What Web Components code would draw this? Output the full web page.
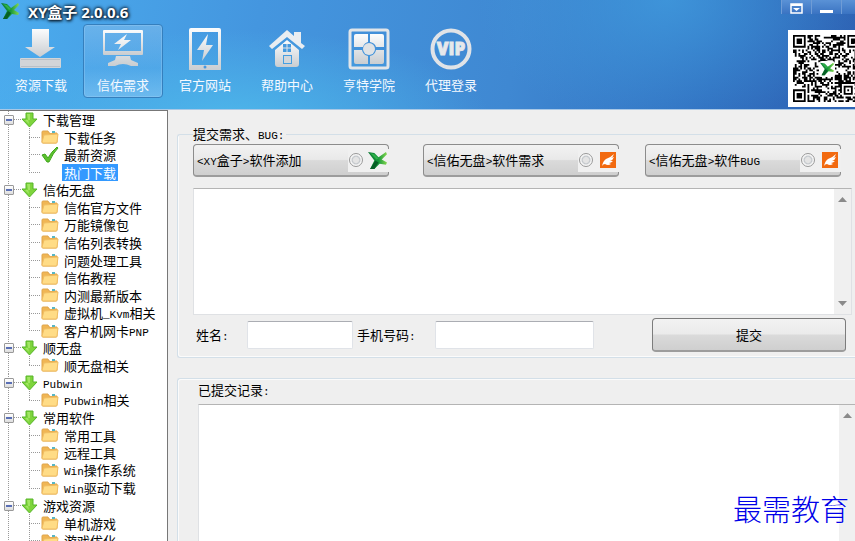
<!DOCTYPE html>
<html lang="zh-CN">
<head>
<meta charset="utf-8">
<title>XY盒子 2.0.0.6</title>
<style>
  html, body { height: 100%; margin: 0; }
  body {
    font: 13px/17px "Noto Sans CJK SC", sans-serif;
    color: #000;
    background: #efefef;
    overflow: hidden;
  }
</style>
</head>
<body>
<xy-app></xy-app>

<script>
const ICONS = {
  logo: `<svg viewBox="0 0 18 18"><defs><linearGradient id="g" x2="1"><stop offset="0" stop-color="#0b7a33"/><stop offset=".55" stop-color="#17983b"/><stop offset="1" stop-color="#86d850"/></linearGradient></defs>
    <path fill="url(#g)" d="M0 1l6 1 4 4 7-5 1 2-5 5 5 3-1 2-6-1-5 5H2l4-8z"/><path fill="#075f26" d="M2 17l5-8 3 2-4 6z"/><path fill="#2fb04a" d="M2 2l4 1 4 4-2 1z"/></svg>`,
  download: `<svg viewBox="0 0 42 42"><path fill="url(#m)" d="M12 1h17v18h6L20 29 5 19h7z"/><rect x="0" y="30" width="41" height="10" rx="1" fill="#d2d5d8"/><path d="M1 31.500h39M1 38.500h39" stroke="#b9c0c7"/></svg>`,
  monitor: `<svg viewBox="0 0 42 42"><path fill="url(#m)" fill-rule="evenodd" d="M2 2h38q1 0 1 1v23q0 1-1 1H2q-1 0-1-1V3q0-1 1-1zm1 3v18h36V5z"/><path fill="url(#m)" d="M25 6L12 16h7l-3 6 13-10h-7zM14 28h14l1 4 7 3v3H29q-8-4-16 0H6v-3l7-3z"/></svg>`,
  tablet: `<svg viewBox="0 0 42 42"><path fill="url(#m)" fill-rule="evenodd" d="M7 0h28q2 0 2 2v39q0 2-2 2H7q-2 0-2-2V2q0-2 2-2zm1 4v33h26V4z"/><path fill="url(#m)" d="M24 6L13 22h7l-2 11 11-16h-7z"/><circle cx="21" cy="39" r="1.500" fill="#4798df"/></svg>`,
  house: `<svg viewBox="0 0 42 42"><path fill="#e9edf1" d="M21 2l7 6V4h7v11l4 3-3 3L21 9 6 21l-3-3z"/><path fill="url(#m)" fill-rule="evenodd" d="M21 12l12 10v14q0 3-3 3H12q-3 0-3-3V22zM17 16v8h8v-8zM17 27v9h9v-9z"/><path d="M21 16v8M17 20h8" stroke="#dfe3e8"/><path fill="#d3d7db" d="M18 28h7v7h-7z"/></svg>`,
  academy: `<svg viewBox="0 0 42 42"><rect x="2" y="2" width="38" height="38" rx="2" fill="none" stroke="#e1e5e9" stroke-width="3"/><path fill="url(#m)" d="M8 6h12v8q-4 1-5 5H6V8q0-2 2-2zM22 6h12q2 0 2 2v11h-8q-1-4-6-5zM6 22h8q1 5 6 6v8H8q-2 0-2-2zM28 22h8v12q0 2-2 2H22v-8q5-1 6-6z"/><circle cx="21" cy="21" r="6" fill="#dfe2e5"/></svg>`,
  vip: `<svg viewBox="0 0 42 42"><circle cx="21" cy="21" r="18.500" fill="none" stroke="#e0e3e7" stroke-width="4"/><text x="21" y="27" text-anchor="middle" font-family="Open Sans, sans-serif" font-size="17" font-weight="800" fill="#e6e8eb" stroke="#e6e8eb" stroke-width=".8">VIP</text></svg>`,
  arrow: `<svg viewBox="0 0 17 16"><path d="M5 1h7v6h4l-7.500 8L1 7h4z" fill="#7ed43c" stroke="#57b528"/><path d="M6 2h3v6H4l4 4" fill="#b0ee74" opacity=".7"/></svg>`,
  folder: `<svg viewBox="0 0 18 16"><path d="M1 3q0-1 1-1h5l1 2h8v9q0 1-1 1H2q-1 0-1-1z" fill="#f0b655" stroke="#dfa54c"/><path d="M9 2l5-1v3H9z" fill="#fff"/><path d="M11 2h3v2h-3z" fill="#58b6c4"/><path d="M3 6l14-1-1 8q0 1-1 1H2q-1 0-1-1z" fill="#ffdc86" stroke="#f0bd62"/></svg>`,
  check: `<svg viewBox="0 0 18 16"><path d="M1 8l3-1 3 4q3-6 9-11l1 1q-5 5-9 14H6z" fill="#5cc32e" stroke="#41a51d"/></svg>`,
  wing: `<svg viewBox="0 0 16 16"><path fill="#f26a10" d="M0 0h16v16H0z"/><path fill="#fff" d="M2 14q1-5 4-7 4-1 8-5-1 3-3 4l3-1q-1 3-4 4h3q-2 2-4 2l2 1q-3 2-6 0-2 0-3 2z"/></svg>`,
  up: `<svg viewBox="0 0 9 5"><path d="M0 5l4.500-5L9 5z" fill="#8a8a8a"/></svg>`,
  down: `<svg viewBox="0 0 9 5"><path d="M0 0h9L4.500 5z" fill="#8a8a8a"/></svg>`
};

// metal gradient shared by the toolbar icons
const METAL = '<defs><linearGradient id="m" x2="0" y2="1"><stop offset="0" stop-color="#fbfcfd"/><stop offset="1" stop-color="#c9cdd1"/></linearGradient></defs>';

const metalIcon = name => ICONS[name].replace('>', `>${METAL}`);

class BaseElement extends HTMLElement {
  constructor() {
    super();
    this.attachShadow({ mode: 'open' });
  }

  connectedCallback() {
    this.shadowRoot.innerHTML = `
    <style>
      * { box-sizing: border-box; }
      svg { display: block; }
      small, ::slotted(small) { font: 11px/13px "Liberation Mono", monospace; }
      ${this.constructor.styles}
    </style>
    ${this.render()}`;
  }
}

/*************************** HEADER ***************************/

class ToolButton extends BaseElement {
  static get styles() {
    return /* css */ `
      :host { display: block; width: 80px; }
      button {
        display: flex;
        flex-direction: column;
        align-items: center;
        gap: 6px;
        width: 100%;
        height: 74px;
        padding: 3px 0 0;
        border: 1px solid transparent;
        border-radius: 4px;
        background: none;
        color: #f4f9ff;
        font: inherit;
      }
      svg { width: 42px; height: 42px; }
      :host([active]) button {
        border-color: #357fbd;
        background: linear-gradient(#7fbcec99, #5aa9ea66 60%, #83c3f399);
        box-shadow: inset 0 0 0 1px #a6d3f655;
      }
    `;
  }

  render() {
    return /* html */ `<button type="button">${metalIcon(this.getAttribute('icon'))}<span><slot></slot></span></button>`;
  }
}

class QrCode extends BaseElement {
  static get styles() {
    return /* css */ `
      :host {
        display: grid;
        place-items: center;
        width: 77px;
        height: 77px;
        background: #fff;
      }
      .code, .mark { grid-area: 1 / 1; }
      .code { width: 67px; height: 67px; }
      .mark { padding: 1px; background: #fff; border-radius: 3px; }
      .mark svg { width: 14px; height: 14px; }
    `;
  }

  modules() {
    const size = 37;
    const corners = [[0, 0], [size - 7, 0], [0, size - 7], [size - 9, size - 9]];
    let seed = 77;
    let path = '';

    for (let y = 0; y < size; y++) {
      for (let x = 0; x < size; x++) {
        seed = (seed * 1103515245 + 12345) % 2147483648;
        let dark = seed / 2147483648 > 0.48;

        corners.forEach(([cx, cy], i) => {
          const half = i === 3 ? 2 : 3;
          const ring = Math.max(Math.abs(x - cx - half), Math.abs(y - cy - half));
          if (ring <= half + 1) {
            dark = i === 3 ? ring === 2 || ring === 0 : ring === 3 || ring < 2;
          }
        });
        if (dark) path += `M${x} ${y}h1v1h-1z`;
      }
    }
    return path;
  }

  render() {
    return /* html */ `
      <svg class="code" viewBox="0 0 37 37"><path d="${this.modules()}" fill="#000"/></svg>
      <div class="mark">${ICONS.logo}</div>`;
  }
}

class AppHeader extends BaseElement {
  static get styles() {
    return /* css */ `
      :host {
        display: block;
        height: 110px;
        overflow: hidden;
        border-bottom: 1px solid #a9c8e6;
        background:
          radial-gradient(ellipse 260px 90px at 27% 110%, #4db6ea, #4db6ea00),
          radial-gradient(ellipse 190px 130px at 78% 0, #409bdecc, #409bde00),
          linear-gradient(100deg, #4bacee, #4496df 30%, #3f88d2 60%, #3170c0 83%, #2e63b4);
      }
      .title-bar { display: flex; height: 24px; padding-left: 1px; }
      .title-bar > svg { width: 18px; height: 18px; margin-top: 2px; }
      h1 {
        flex: 1;
        margin: 0 0 0 9px;
        font: 700 15px/25px "Open Sans", "Noto Sans CJK SC", sans-serif;
        color: #fff;
        text-shadow: 0 0 3px #012, 0 0 4px #123, 1px 1px 3px #123;
      }
      .controls { display: flex; height: 13px; margin-right: -16px; }
      .controls button {
        width: 30px;
        height: 14px;
        padding: 2px 0 0 8px;
        border: 0;
        border-left: 1px solid #6f9cd6;
        background: linear-gradient(#5a92d6, #3a73c2);
      }
      .controls svg { width: 13px; height: 11px; }
      .bar { display: flex; justify-content: space-between; }
      nav { display: flex; gap: 2px; padding-left: 1px; }
      qr-code { margin: 6px -10px 0 0; }
    `;
  }

  render() {
    return /* html */ `
      <div class="title-bar">
        ${ICONS.logo}
        <h1>XY盒子 2.0.0.6</h1>
        <div class="controls">
          <button type="button" aria-label="菜单"><svg viewBox="0 0 13 11"><path d="M1 1h11v9H1z" fill="none" stroke="#fff" stroke-width="1.500"/><path d="M1 2h11" stroke="#fff" stroke-width="2"/><path d="M3 5h7L6.500 8z" fill="#fff"/></svg></button>
          <button type="button" aria-label="最小化"><svg viewBox="0 0 13 11"><path d="M0 7h13v3H0z" fill="#fff"/></svg></button>
          <button type="button" aria-label="关闭"></button>
        </div>
      </div>
      <div class="bar">
        <nav>
          <tool-button icon="download">资源下载</tool-button>
          <tool-button icon="monitor" active>信佑需求</tool-button>
          <tool-button icon="tablet">官方网站</tool-button>
          <tool-button icon="house">帮助中心</tool-button>
          <tool-button icon="academy">亨特学院</tool-button>
          <tool-button icon="vip">代理登录</tool-button>
        </nav>
        <qr-code></qr-code>
      </div>`;
  }
}

/**************************** TREE ****************************/

class TreeItem extends BaseElement {
  static get styles() {
    return /* css */ `
      :host { display: flex; align-items: center; height: 18px; white-space: nowrap; }
      :host(:nth-child(3n)) { height: 17px; }
      .line {
        width: 12px;
        height: 1px;
        background: repeating-linear-gradient(90deg, #999 0 1px, #fff 1px 2px);
      }
      .icon { width: 18px; height: 16px; margin-right: 3px; }
      .text { padding: 0 2px; }
      :host([selected]) .text { background: #3399ff; color: #fff; }
    `;
  }

  render() {
    return /* html */ `
      <span class="line"></span>
      <span class="icon">${ICONS[this.getAttribute('icon') || 'folder'] || ''}</span>
      <span class="text"><slot></slot></span>`;
  }
}

class TreeGroup extends BaseElement {
  static get styles() {
    return /* css */ `
      :host {
        --dots: repeating-linear-gradient(#999 0 1px, #fff 1px 2px);
        display: block;
        background: var(--dots) 8px 0 / 1px 100% no-repeat;
      }
      .head { display: flex; align-items: center; height: 17px; padding-left: 4px; }
      button {
        width: 10px;
        height: 10px;
        padding: 3px 1px;
        border: 1px solid #999;
        border-radius: 1px;
        background: linear-gradient(#fff, #ddd);
      }
      button::before { content: ""; display: block; height: 2px; background: #5a6fb5; }
      .line {
        width: 7px;
        height: 1px;
        background: repeating-linear-gradient(90deg, #999 0 1px, #fff 1px 2px);
      }
      svg { width: 17px; height: 16px; margin-right: 5px; }
      .items {
        padding-left: 29px;
        background: var(--dots) 29px 0 / 1px calc(100% - 9px) no-repeat;
      }
    `;
  }

  render() {
    return /* html */ `
      <div class="head">
        <button type="button" aria-label="折叠"></button>
        <span class="line"></span>
        ${ICONS.arrow}
        <div><slot name="label"></slot></div>
      </div>
      <div class="items"><slot></slot></div>`;
  }
}

class SideTree extends BaseElement {
  static get styles() {
    return /* css */ `
      :host {
        display: block;
        width: 168px;
        flex: none;
        overflow: hidden;
        border: solid #777;
        border-width: 1px 1px 0 0;
        background: #fff;
      }
    `;
  }

  render() {
    return /* html */ `
      <tree-group><span slot="label">下载管理</span>
        <tree-item>下载任务</tree-item>
        <tree-item icon="check">最新资源</tree-item>
        <tree-item icon="none" selected>热门下载</tree-item>
      </tree-group>
      <tree-group><span slot="label">信佑无盘</span>
        <tree-item>信佑官方文件</tree-item>
        <tree-item>万能镜像包</tree-item>
        <tree-item>信佑列表转换</tree-item>
        <tree-item>问题处理工具</tree-item>
        <tree-item>信佑教程</tree-item>
        <tree-item>内测最新版本</tree-item>
        <tree-item>虚拟机<small>_Kvm</small>相关</tree-item>
        <tree-item>客户机网卡<small>PNP</small></tree-item>
      </tree-group>
      <tree-group><span slot="label">顺无盘</span>
        <tree-item>顺无盘相关</tree-item>
      </tree-group>
      <tree-group><span slot="label"><small>Pubwin</small></span>
        <tree-item><small>Pubwin</small>相关</tree-item>
      </tree-group>
      <tree-group><span slot="label">常用软件</span>
        <tree-item>常用工具</tree-item>
        <tree-item>远程工具</tree-item>
        <tree-item><small>Win</small>操作系统</tree-item>
        <tree-item><small>Win</small>驱动下载</tree-item>
      </tree-group>
      <tree-group><span slot="label">游戏资源</span>
        <tree-item>单机游戏</tree-item>
        <tree-item>游戏优化</tree-item>
      </tree-group>`;
  }
}

/**************************** FORM ****************************/

class ScrollBox extends BaseElement {
  static get styles() {
    return /* css */ `
      :host {
        display: flex;
        border: 1px solid #dfe1e4;
        border-top-color: #b4b4b4;
        background: #fff;
      }
      textarea {
        flex: 1;
        min-width: 0;
        padding: 2px;
        border: 0;
        outline: 0;
        resize: none;
        overflow: hidden;
        background: none;
        font: inherit;
      }
      .track {
        display: flex;
        flex-direction: column;
        justify-content: space-between;
        align-items: center;
        width: 17px;
        padding: 8px 0;
        background: #f0f0f0;
      }
      .track svg { width: 9px; height: 5px; }
    `;
  }

  render() {
    return /* html */ `
      <textarea aria-label="${this.getAttribute('label')}"></textarea>
      <div class="track">${ICONS.up}${ICONS.down}</div>`;
  }
}

class DemandForm extends BaseElement {
  static get styles() {
    return /* css */ `
      :host { display: block; }
      fieldset {
        min-width: 0;
        margin: 0;
        padding: 1px 3px 5px 15px;
        border: 1px solid #d3dfe8;
        border-right: 0;
        border-radius: 3px 0 0 3px;
        box-shadow: inset 1px -1px #fbfbfb;
      }
      legend { padding: 0 2px 0 0; }
      .choices {
        display: grid;
        grid-template-columns: 230fr 222fr 196fr;
        padding-right: 11px;
      }
      .choice {
        display: flex;
        align-items: center;
        justify-content: space-between;
        width: 196px;
        height: 33px;
        padding-left: 3px;
        border: 1px solid #8c8c8c;
        border-bottom: 2px solid #9c9c9c;
        border-radius: 4px;
        background: linear-gradient(#f2f2f2, #e9e9e9 48%, #dadada 52%, #cfcfcf);
      }
      .pick {
        display: flex;
        align-items: center;
        gap: 7px;
        height: 23px;
        margin-right: -1px;
        padding: 0 3px 0 1px;
        background: #f0f0f0;
      }
      .pick svg { width: 16px; height: 16px; }
      .pick .big { width: 19px; height: 19px; margin: 0 -1px 0 -2px; }
      input[type=radio] {
        appearance: none;
        width: 14px;
        height: 14px;
        margin: 0;
        border: 1px solid #999;
        border-radius: 50%;
        background: radial-gradient(#e4e4e4 30%, #c4c8cc 45%, #f6f6f6 60%);
      }
      scroll-box { height: 127px; margin-top: 11px; }
      .contact {
        display: flex;
        align-items: center;
        margin-top: 3px;
        padding: 0 6px 0 3px;
      }
      input[type=text] {
        height: 28px;
        margin-right: 4px;
        padding: 0 4px;
        border: 1px solid #e0e3e8;
        border-top-color: #abadb3;
        border-radius: 2px;
        background: #fff;
        font: inherit;
      }
      .name { width: 51px; }
      .phone { width: 78px; }
      #name { width: 106px; }
      #phone { width: 159px; }
      .submit {
        width: 194px;
        height: 34px;
        margin-left: auto;
        border: 1px solid #7c7c7c;
        border-bottom: 2px solid #9c9c9c;
        border-radius: 4px;
        background: linear-gradient(#f2f2f2, #ebebeb 48%, #dadada 52%, #cfcfcf);
        font: inherit;
        color: #000;
      }
    `;
  }

  render() {
    return /* html */ `
      <form>
        <fieldset>
          <legend>提交需求、<small>BUG:</small></legend>
          <div class="choices">
            <label class="choice">
              <span><small>&lt;XY</small>盒子<small>&gt;</small>软件添加</span>
              <span class="pick"><input type="radio" name="kind">${ICONS.logo.replace('<svg', '<svg class="big"')}</span>
            </label>
            <label class="choice">
              <span><small>&lt;</small>信佑无盘<small>&gt;</small>软件需求</span>
              <span class="pick"><input type="radio" name="kind">${ICONS.wing}</span>
            </label>
            <label class="choice">
              <span><small>&lt;</small>信佑无盘<small>&gt;</small>软件<small>BUG</small></span>
              <span class="pick"><input type="radio" name="kind">${ICONS.wing}</span>
            </label>
          </div>
          <scroll-box label="需求内容"></scroll-box>
          <div class="contact">
            <label class="name" for="name">姓名<small>:</small></label>
            <input type="text" id="name">
            <label class="phone" for="phone">手机号码<small>:</small></label>
            <input type="text" id="phone">
            <button class="submit" type="button">提交</button>
          </div>
        </fieldset>
      </form>`;
  }
}

class RecordPanel extends BaseElement {
  static get styles() {
    return /* css */ `
      :host {
        display: flex;
        flex-direction: column;
        padding: 2px 0 0 20px;
        border: solid #d3dfe8;
        border-width: 1px 0 0 1px;
        border-radius: 3px 0 0 0;
        box-shadow: inset 1px 1px #fbfbfb;
      }
      h2 { margin: 0 0 5px; font: inherit; }
      scroll-box { flex: 1; margin: 0 -2px -20px 0; }
    `;
  }

  render() {
    return /* html */ `<h2>已提交记录<small>:</small></h2><scroll-box label="已提交记录"></scroll-box>`;
  }
}

class XyApp extends BaseElement {
  static get styles() {
    return /* css */ `
      :host {
        display: flex;
        flex-direction: column;
        height: 100%;
        position: relative;
        overflow: hidden;
      }
      app-header { flex: none; }
      .body { display: flex; flex: 1; min-height: 0; }
      main {
        display: flex;
        flex-direction: column;
        flex: 1;
        gap: 20px;
        min-width: 0;
        padding: 15px 0 0 9px;
        overflow: hidden;
      }
      record-panel { flex: 1; }
      .watermark {
        position: absolute;
        right: 6px;
        bottom: 16px;
        font: 300 29px/34px KaiTi, "Noto Sans CJK SC", serif;
        color: #0000e8;
        text-shadow: 0 0 2px #fff, 0 0 2px #fff;
      }
    `;
  }

  render() {
    return /* html */ `
      <app-header></app-header>
      <div class="body">
        <side-tree></side-tree>
        <main>
          <demand-form></demand-form>
          <record-panel></record-panel>
        </main>
      </div>
      <div class="watermark">最需教育</div>`;
  }
}

customElements.define('tool-button', ToolButton);
customElements.define('qr-code', QrCode);
customElements.define('app-header', AppHeader);
customElements.define('tree-item', TreeItem);
customElements.define('tree-group', TreeGroup);
customElements.define('side-tree', SideTree);
customElements.define('scroll-box', ScrollBox);
customElements.define('demand-form', DemandForm);
customElements.define('record-panel', RecordPanel);
customElements.define('xy-app', XyApp);
</script>
</body>
</html>
